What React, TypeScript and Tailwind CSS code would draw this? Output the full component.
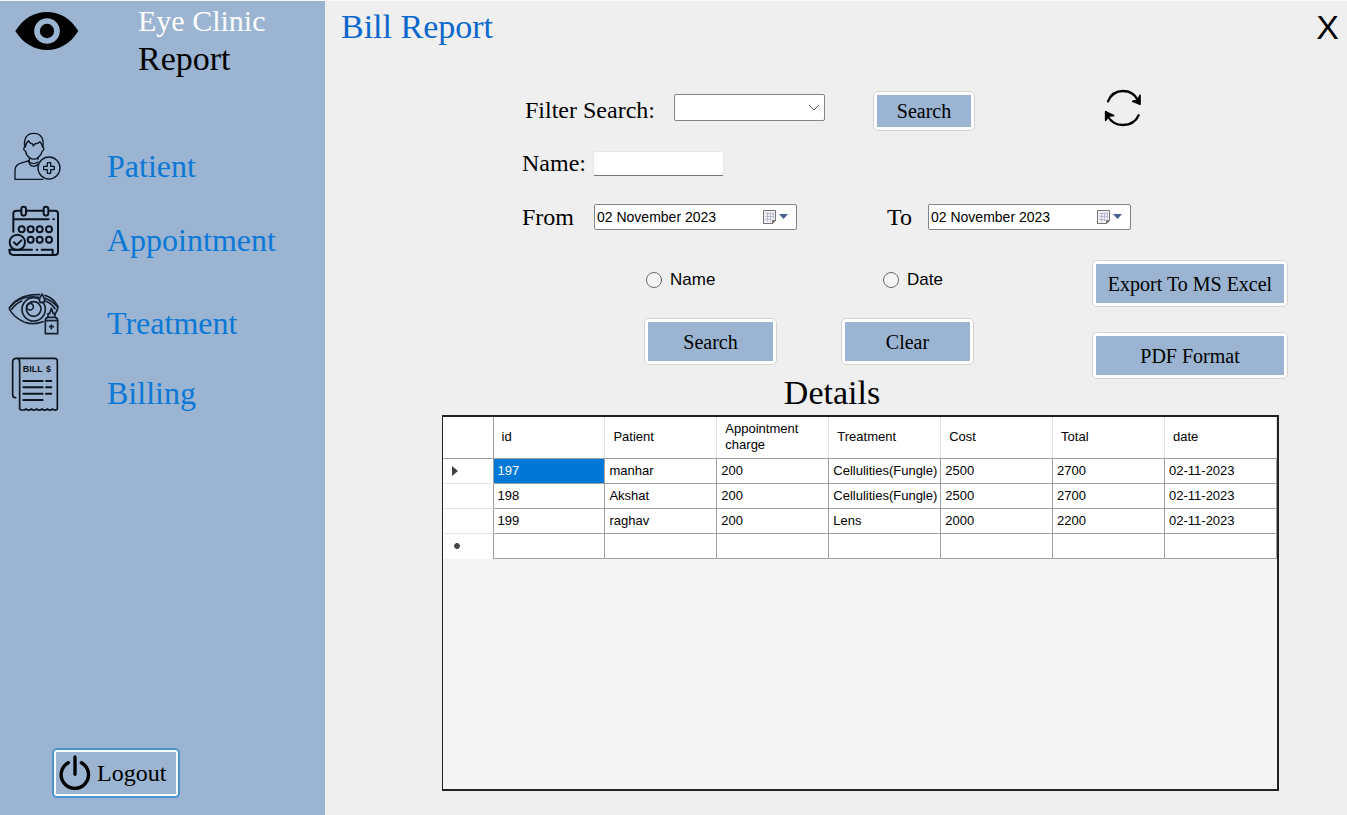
import React, { useState } from "react";

const columns = ["id", "Patient", "Appointment charge", "Treatment", "Cost", "Total", "date"];

const bills = [
  ["197", "manhar", "200", "Cellulities(Fungle)", "2500", "2700", "02-11-2023"],
  ["198", "Akshat", "200", "Cellulities(Fungle)", "2500", "2700", "02-11-2023"],
  ["199", "raghav", "200", "Lens", "2000", "2200", "02-11-2023"],
];

function EyeLogo() {
  return (
    <svg width="64" height="40" viewBox="44 33 192 120" aria-hidden="true">
      <path d="M45 93C68 56 102 36 140 36s71 20 94 57c-23 37-56 57-94 57S68 130 45 93Z" fill="#000" />
      <circle cx="140" cy="93" r="30" fill="none" stroke="#9ab4d1" strokeWidth="17" />
    </svg>
  );
}

function PatientIcon() {
  return (
    <svg width="48" height="50" viewBox="42 394 144 150" fill="none" stroke="#0b1626" strokeWidth="4" strokeLinecap="round" strokeLinejoin="round" aria-hidden="true">
      <path d="M74 440c-3-24 4-42 27-42s31 16 28 42" />
      <path d="M76 438c1-8 4-14 10-18 2 6 6 9 11 9l3 7 5-7c6 1 11-1 15-6 4 4 6 9 7 15" />
      <path d="M74 440c-5 2-3 10 3 12 1 10 6 15 12 19 7 6 18 6 25 0 6-5 11-10 12-19 6-2 7-10 3-12" />
      <path d="M88 471v11M114 470v6" />
      <path d="M85 481c-22 6-40 8-40 29v26h84" />
      <path d="M85 480c2 10 7 17 16 17 6 0 10-3 14-7M88 484c8 6 18 6 26 0" />
      <circle cx="147" cy="502" r="33" />
      <path d="M142 486h10v11h11v10h-11v11h-10v-11h-11v-10h11Z" />
    </svg>
  );
}

function AppointmentIcon() {
  return (
    <svg width="52" height="52" viewBox="25 41 156 156" fill="none" stroke="#0a1220" strokeWidth="6" strokeLinecap="round" strokeLinejoin="round" aria-hidden="true">
      <path d="M41 121V67c0-6 4-9 9-9h14M80 58h51M148 58h18c5 0 9 3 9 9v116c0 5-4 8-9 8H42c-8 0-13-5-13-16h68" />
      <rect x="65" y="46" width="14" height="27" rx="7" />
      <rect x="132" y="46" width="14" height="27" rx="7" />
      <path d="M42 84h105M161 84h2M111 175h2M126 175h33v14" />
      {[66, 93, 120, 148].map((x) => <circle key={x} cx={x} cy="114" r="9" />)}
      {[93, 120, 148].map((x) => <circle key={x} cx={x} cy="145" r="9" />)}
      <circle cx="53" cy="153" r="23" />
      <path d="m43 153 8 8 14-14" />
    </svg>
  );
}

function TreatmentIcon() {
  return (
    <svg width="52" height="44" viewBox="25 302 156 132" fill="none" stroke="#142030" strokeWidth="5" strokeLinecap="round" strokeLinejoin="round" aria-hidden="true">
      <path d="M72 391c-20-9-35-22-43-38 4-11 15-22 29-30 18-11 39-14 61-13M136 312c17 5 31 18 39 34-1 10-3 15-9 22" />
      <path d="M29 349c22-27 52-37 88-31M136 321c14 5 27 14 37 25" />
      <path d="M36 354c8-12 17-19 30-25M137 329c11 4 22 13 29 23M76 393c17 5 36 5 54-2" />
      <circle cx="102" cy="354" r="35" />
      <circle cx="102" cy="353" r="22" />
      <circle cx="91" cy="346" r="10" />
      <path d="M127 308c5 9 8 13 8 18a8 8 0 0 1-16 0c0-5 3-9 8-18Z" fill="#9ab4d1" />
      <path d="M145 377v-10h5l5-16 6 16h5v10M137 388c0-6 3-9 8-10h21c5 1 8 4 8 10v39h-37Z" fill="#9ab4d1" />
      <path d="M137 388h37M155 401v11M150 406h11" />
    </svg>
  );
}

function BillingIcon() {
  return (
    <svg width="48" height="54" viewBox="33 499 144 162" fill="none" stroke="#0d1520" strokeWidth="5" strokeLinecap="round" strokeLinejoin="round" aria-hidden="true">
      <path d="M47 621c-6 0-9-3-9-9v-98c0-7 4-11 11-11h115c5 0 8 3 8 8v145c-5 3-10 3-14-1-5 4-11 4-16 0-5 4-11 4-16 0-5 4-11 4-16 0-5 4-11 4-16 0-5 4-11 4-16 0-5 4-14 4-19 1V516c0-7-2-12-8-13" />
      <path d="M70 571h58M138 571h16M70 590h58M138 590h16M70 609h58M138 609h16M70 628h58" strokeWidth="6" />
      <text x="68" y="543" fontFamily="Liberation Sans" fontWeight="700" fontSize="27" fill="#0d1520" stroke="none">BILL</text>
      <text x="138" y="543" fontFamily="Liberation Sans" fontWeight="700" fontSize="27" fill="#0d1520" stroke="none">$</text>
    </svg>
  );
}

function PowerIcon() {
  return (
    <svg width="32" height="36" viewBox="178 74 96 108" fill="none" stroke="#000" strokeWidth="10" strokeLinecap="round" aria-hidden="true">
      <path d="M206 97a41 41 0 1 0 39 0M226 80v52" />
    </svg>
  );
}

function RefreshIcon() {
  return (
    <svg width="38" height="38" viewBox="824 27 114 114" fill="none" stroke="#000" strokeWidth="7" strokeLinecap="round" aria-hidden="true">
      <path d="M836 64c8-19 24-31 45-31 20 0 36 10 45 28M928 106c-8 18-26 29-47 29-20 0-37-11-46-27" />
      <path d="M932 46v27l-22-9 15-4ZM829 121V95l24 12-15 1Z" fill="#000" strokeLinejoin="round" strokeWidth="5" />
    </svg>
  );
}

function CalendarIcon() {
  return (
    <svg width="27" height="16" viewBox="0 0 27 16" aria-hidden="true">
      <path d="M1.500 1.500h12v10l-3 3h-9Z" fill="#eef0f4" stroke="#77736f" />
      <path d="M3.500 4.500h8M3.500 7.500h8M3.500 10.500h6M5.500 3.500v9M8.500 3.500v9M11.500 3.500v6" stroke="#b7bccb" />
      <path d="m10.500 14.500 3-3h-3Z" fill="#77736f" stroke="#77736f" />
      <path d="M17 5h9l-4.500 5Z" fill="#4a5f91" />
    </svg>
  );
}

const navItems = [
  { label: "Patient", Icon: PatientIcon, space: "pl-[14px]" },
  { label: "Appointment", Icon: AppointmentIcon, space: "pl-2 mt-1" },
  { label: "Treatment", Icon: TreatmentIcon, space: "pl-2 mt-[13px]" },
  { label: "Billing", Icon: BillingIcon, space: "pl-[11px]" },
];

function FormButton({ className, children }: { className: string; children: React.ReactNode }) {
  return (
    <button type="button" className={`rounded-[5px] border border-[#d3d3d3] bg-white p-[3px] ${className}`}>
      <span className="flex h-full items-center justify-center bg-[#9ab4d1] text-[20px] leading-6">{children}</span>
    </button>
  );
}

function DateField({ id }: { id: string }) {
  const [value, setValue] = useState("02 November 2023");
  return (
    <div className="flex h-[26px] w-[203px] items-center rounded-[2px] border border-[#858585] bg-white pr-[7px]">
      <input
        id={id}
        type="text"
        value={value}
        onChange={(e) => setValue(e.target.value)}
        className="min-w-0 flex-1 bg-transparent pl-[2px] font-['Liberation_Sans',sans-serif] text-[14px] leading-5 outline-none"
      />
      <button type="button" aria-label="Open calendar">
        <CalendarIcon />
      </button>
    </div>
  );
}

export default function App() {
  return (
    <div className="flex min-h-screen border-t border-[#f8f8f8] bg-[#efefef] font-['Liberation_Serif',serif] text-black">
      <aside className="flex w-[325px] shrink-0 flex-col bg-[#9ab4d1]">
        <div className="flex items-start pl-[15px] pt-1">
          <div className="pt-[6px]">
            <EyeLogo />
          </div>
          <div className="pl-[59px]">
            <p className="text-[30px] leading-8 text-white">Eye Clinic</p>
            <p className="text-[34px] leading-[44px]">Report</p>
          </div>
        </div>
        <nav className="flex flex-col pt-[41px]">
          {navItems.map(({ label, Icon, space }) => (
            <a key={label} href="#" className={`flex h-[70px] items-center ${space}`}>
              <Icon />
              <span className="ml-auto w-[218px] pt-[18px] text-[32px] leading-9 text-[#0c78d6]">{label}</span>
            </a>
          ))}
        </nav>
        <button type="button" className="mb-[17px] ml-[52px] mt-auto h-[50px] w-32 rounded-[5px] border-2 border-[#4c93d0] bg-white p-[2px]">
          <span className="flex h-full items-center gap-[6px] bg-[#9ab4d1] pl-[3px] text-[24px] leading-7">
            <PowerIcon />
            Logout
          </span>
        </button>
      </aside>

      <main className="flex flex-1 flex-col">
        <header className="flex items-center justify-between pl-4 pr-2 pt-1">
          <h1 className="text-[34px] leading-[44px] text-[#0c68cc]">Bill Report</h1>
          <button type="button" aria-label="Close" className="font-['Liberation_Sans',sans-serif] text-[34px] leading-[44px]">
            X
          </button>
        </header>

        <div className="flex flex-1 flex-col pb-6 pl-[117px] pr-[59px] pt-10">
          <div className="flex items-start pl-[83px]">
            <label htmlFor="filter" className="w-[149px] text-[24px] leading-[42px]">
              Filter Search:
            </label>
            <div className="relative mt-[5px]">
              <select id="filter" className="block h-[27px] w-[151px] appearance-none rounded-[2px] border border-[#858585] bg-white">
                <option value=""></option>
              </select>
              <svg className="pointer-events-none absolute right-[5px] top-[10px]" width="12" height="8" viewBox="0 0 12 8" fill="none" stroke="#606060" aria-hidden="true">
                <path d="m1 1 5 5 5-5" />
              </svg>
            </div>
            <FormButton className="ml-12 mt-[2px] h-10 w-[102px]">Search</FormButton>
            <button type="button" aria-label="Refresh" className="ml-[129px]">
              <RefreshIcon />
            </button>
          </div>

          <div className="flex items-center pl-20 pt-4">
            <label htmlFor="name" className="w-[71px] text-[24px] leading-8">
              Name:
            </label>
            <input id="name" type="text" className="h-[25px] w-[131px] rounded-[2px] border border-[#e6e6e6] border-b-[#777] bg-white px-1" />
          </div>

          <div className="flex items-center pl-20 pt-[22px]">
            <label htmlFor="from" className="w-[72px] text-[24px] leading-8">
              From
            </label>
            <DateField id="from" />
            <label htmlFor="to" className="ml-[90px] w-[41px] text-[24px] leading-8">
              To
            </label>
            <DateField id="to" />
          </div>

          <div className="flex justify-between pl-[202px] pt-[27px]">
            <div>
              <div className="flex pt-2 font-['Liberation_Sans',sans-serif] text-[17px] leading-6">
                <label className="flex w-[237px] items-center gap-2 pl-[2px]">
                  <input type="radio" name="mode" className="size-4 appearance-none rounded-full border border-[#6b6b6b] bg-[#f6f6f6] checked:border-4 checked:border-[#0078d7]" />
                  Name
                </label>
                <label className="flex items-center gap-2 pl-[2px]">
                  <input type="radio" name="mode" className="size-4 appearance-none rounded-full border border-[#6b6b6b] bg-[#f6f6f6] checked:border-4 checked:border-[#0078d7]" />
                  Date
                </label>
              </div>
              <div className="flex gap-16 pt-[26px]">
                <FormButton className="h-[47px] w-[133px]">Search</FormButton>
                <FormButton className="h-[47px] w-[133px]">Clear</FormButton>
              </div>
            </div>
            <div className="flex w-[196px] flex-col gap-[25px]">
              <FormButton className="h-[47px]">Export To MS Excel</FormButton>
              <FormButton className="h-[47px]">PDF Format</FormButton>
            </div>
          </div>

          <h2 className="pb-2 pr-[66px] text-center text-[34px] leading-7">Details</h2>

          <div className="mr-[9px] flex-1 border border-b-2 border-r-2 border-t-2 border-[#222] bg-[#f4f4f4] font-['Liberation_Sans',sans-serif] text-[13px] leading-4">
            <table className="w-full table-fixed border-collapse bg-white text-left">
              <thead>
                <tr className="h-[41px]">
                  <th className="w-[50px] border-b border-r border-[#a0a0a0]"></th>
                  {columns.map((c) => (
                    <th key={c} className="border-b border-r border-b-[#a0a0a0] border-r-[#e4e4e4] pl-2 font-normal">
                      {c}
                    </th>
                  ))}
                </tr>
              </thead>
              <tbody>
                {bills.map((row, r) => (
                  <tr key={row[0]} className="h-[25px]">
                    <th className="border-b border-r border-b-[#e4e4e4] border-r-[#a0a0a0] pl-2">
                      {r === 0 && (
                        <svg width="8" height="12" viewBox="0 0 8 12" aria-label="Current row">
                          <path d="M1 1v10l6-5Z" fill="#404040" />
                        </svg>
                      )}
                    </th>
                    {row.map((cell, c) => (
                      <td key={c} className={`whitespace-nowrap border border-[#a0a0a0] pl-1 ${r === 0 && c === 0 ? "bg-[#0078d7] text-white" : ""}`}>
                        {cell}
                      </td>
                    ))}
                  </tr>
                ))}
                <tr className="h-[25px]">
                  <th className="border-r border-[#a0a0a0] pl-[10px]">
                    <svg width="8" height="8" viewBox="0 0 8 8" stroke="#484848" strokeWidth="2" aria-label="New row">
                      <path d="M4 1v6M1 4h6M2 2l4 4M6 2 2 6" />
                    </svg>
                  </th>
                  {columns.map((c) => (
                    <td key={c} className="border border-[#a0a0a0]"></td>
                  ))}
                </tr>
              </tbody>
            </table>
          </div>
        </div>
      </main>
    </div>
  );
}
